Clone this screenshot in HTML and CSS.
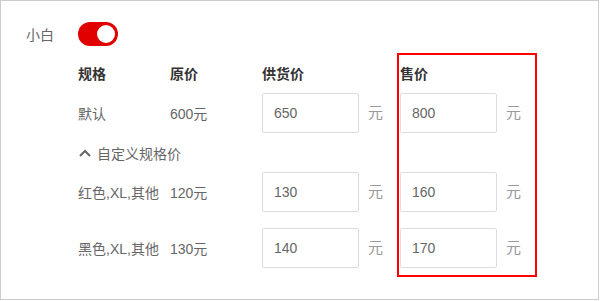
FILE: index.html
```html
<!DOCTYPE html>
<html lang="zh">
<head>
<meta charset="utf-8">
<link rel="stylesheet" href="styles.css">
</head>
<body>
<div class="panel">
  <div class="top-row">
    <span class="label">小白</span>
    <span class="toggle"><span class="knob"></span></span>
  </div>
  <div class="table">
    <div class="row head">
      <span class="c1">规格</span>
      <span class="c2">原价</span>
      <span class="c3">供货价</span>
      <span class="c4">售价</span>
    </div>
    <div class="row item first">
      <span class="c1">默认</span>
      <span class="c2">600元</span>
      <span class="c3 field"><span class="input">650</span><span class="unit">元</span></span>
      <span class="c4 field"><span class="input">800</span><span class="unit">元</span></span>
    </div>
    <div class="custom">
      <svg class="chev" width="12" height="8" viewBox="0 0 12 8"><polyline points="1,7 6,2 11,7" fill="none" stroke="#666" stroke-width="2"/></svg>
      <span>自定义规格价</span>
    </div>
    <div class="row item second">
      <span class="c1">红色,XL,其他</span>
      <span class="c2">120元</span>
      <span class="c3 field"><span class="input">130</span><span class="unit">元</span></span>
      <span class="c4 field"><span class="input">160</span><span class="unit">元</span></span>
    </div>
    <div class="row item third">
      <span class="c1">黑色,XL,其他</span>
      <span class="c2">130元</span>
      <span class="c3 field"><span class="input">140</span><span class="unit">元</span></span>
      <span class="c4 field"><span class="input">170</span><span class="unit">元</span></span>
    </div>
  </div>
  <div class="highlight"></div>
</div>
</body>
</html>
```

FILE: styles.css
```css
html, body {
  margin: 0;
  padding: 0;
  background: #fff;
}
body {
  font-family: "Liberation Sans", "Noto Sans CJK SC", sans-serif;
  font-size: 14px;
  color: #666;
}
.panel {
  position: relative;
  box-sizing: border-box;
  width: 599px;
  height: 300px;
  border: 1px solid #ccc;
}
.top-row {
  display: flex;
  align-items: center;
  height: 24px;
  margin-top: 21px;
  padding-left: 25px;
}
.label {
  width: 52px;
  color: #666;
}
.toggle {
  position: relative;
  display: inline-block;
  width: 40px;
  height: 24px;
  border-radius: 12px;
  background: #e00000;
}
.knob {
  position: absolute;
  top: 3px;
  left: 19px;
  width: 18px;
  height: 18px;
  border-radius: 50%;
  background: #fff;
}
.table {
  padding-left: 77px;
}
.row {
  display: grid;
  grid-template-columns: 92px 92px 138px 140px;
  align-items: center;
}
.head {
  height: 20px;
  margin-top: 17px;
  color: #333;
  font-weight: bold;
}
.item {
  height: 40px;
}
.first { margin-top: 10px; }
.second { margin-top: 9px; }
.third { margin-top: 16px; }
.field {
  display: flex;
  align-items: center;
}
.input {
  box-sizing: border-box;
  width: 97px;
  height: 40px;
  border: 1px solid #ddd;
  border-radius: 2px;
  padding-left: 11px;
  line-height: 38px;
  color: #666;
}
.unit {
  margin-left: 9px;
  margin-bottom: 4px;
  font-family: "Noto Sans CJK SC", sans-serif;
  font-size: 15px;
  line-height: 1;
  color: #999;
}
.custom {
  display: flex;
  align-items: center;
  height: 21px;
  margin-top: 9px;
  padding-left: 1px;
  color: #666;
}
.chev {
  margin-right: 6px;
}
.highlight {
  position: absolute;
  left: 396px;
  top: 52px;
  width: 136px;
  height: 220px;
  border: 2px solid #f00;
}
```
